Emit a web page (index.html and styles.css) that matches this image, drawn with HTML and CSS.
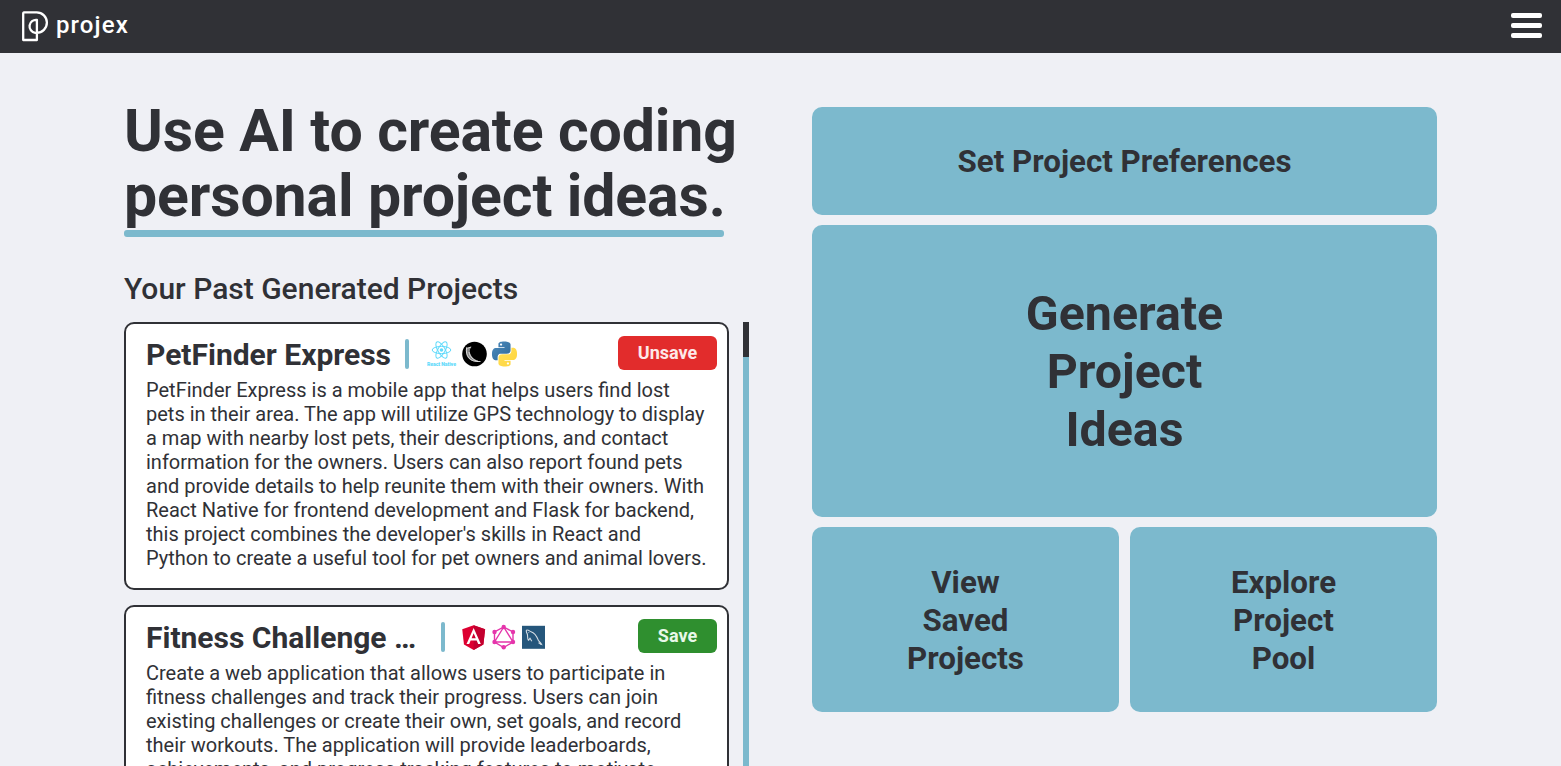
FILE: index.html
```html
<!DOCTYPE html>
<html lang="en">
<head>
<meta charset="utf-8">
<title>projex</title>
<link rel="stylesheet" href="styles.css">
</head>
<body>
<header class="navbar">
  <a class="brand">
    <svg class="brand-mark" viewBox="0 0 28 32" fill="none" stroke="#fff" stroke-width="2.3">
      <path d="M3 2.4H15.7A10.2 10.2 0 0 1 15.7 22.8H14.2A6.5 6.5 0 1 1 15.9 9.9V30H2.2V3.4Q2.2 2.4 3 2.4Z" stroke-linejoin="round"/>
    </svg>
    <span class="brand-name">projex</span>
  </a>
  <button class="menu" aria-label="Menu"><span></span><span></span><span></span></button>
</header>
<main class="page">
  <section class="left">
    <h1 class="title">Use AI to create coding<br><span class="underlined">personal project ideas.</span></h1>
    <div class="title-rule"></div>
    <h2 class="subtitle">Your Past Generated Projects</h2>
    <div class="history">
      <div class="cards">
        <article class="card">
          <div class="card-head">
            <h3 class="card-title">PetFinder Express</h3>
            <span class="divider"></span>
            <div class="tech">
              <svg viewBox="0 0 30 26">
                <g fill="none" stroke="#61dafb" stroke-width="1">
                  <ellipse cx="14.5" cy="9" rx="9.3" ry="3.6"/>
                  <ellipse cx="14.5" cy="9" rx="9.3" ry="3.6" transform="rotate(60 14.5 9)"/>
                  <ellipse cx="14.5" cy="9" rx="9.3" ry="3.6" transform="rotate(120 14.5 9)"/>
                </g>
                <circle cx="14.5" cy="9" r="1.8" fill="#61dafb"/>
                <text class="native" x="14.5" y="25.3" text-anchor="middle" textLength="29">React Native</text>
              </svg>
              <svg viewBox="0 0 30 26">
                <circle cx="17.5" cy="13" r="12.3" fill="#000"/>
                <path d="M9.3 6.2C7.5 14.5 12 22.5 24 20.6C17.8 19.8 14.4 16 13 12C12.4 9.6 13 7.4 14.8 5.6C12.3 6.6 11 6.8 9.3 6.2Z" fill="#8a8a8a"/>
                <path d="M9.6 6.5C8.2 14.5 12.5 21.5 23.5 20.5M10.5 7.2L14 6M12 11C13 16 16 19 21 20.2" fill="none" stroke="#eee" stroke-width=".8"/>
              </svg>
              <svg viewBox="-4.8 -.5 28.8 25">
                <defs>
                  <linearGradient id="blue" x2="1" y2="1"><stop stop-color="#4b8bbe"/><stop offset="1" stop-color="#306998"/></linearGradient>
                  <linearGradient id="yellow" x1="1" y1="1" x2="0" y2="0"><stop stop-color="#ffe05a"/><stop offset="1" stop-color="#ffd43b"/></linearGradient>
                  <path id="snake" d="M14.25.18l.9.2.73.26.59.3.45.32.34.34.25.34.16.33.1.3.04.26.02.2-.01.13V8.5l-.05.63-.13.55-.21.46-.26.38-.3.31-.33.25-.35.19-.35.14-.33.1-.3.07-.26.04-.21.02H8.77l-.69.05-.59.14-.5.22-.41.27-.33.32-.27.35-.2.36-.15.37-.1.35-.07.32-.04.27-.02.21v3.06H3.17l-.21-.03-.28-.07-.32-.12-.35-.18-.36-.26-.36-.36-.35-.46-.32-.59-.28-.73-.21-.88-.14-1.05-.05-1.23.06-1.22.16-1.04.24-.87.32-.71.36-.57.4-.44.42-.33.42-.24.4-.16.36-.1.32-.05.24-.01h.16l.06.01h8.16v-.83H6.18l-.01-2.75-.02-.37.05-.34.11-.31.17-.28.25-.26.31-.23.38-.2.44-.18.51-.15.58-.12.64-.1.71-.06.77-.04.84-.02 1.27.05zm-6.3 1.98l-.23.33-.08.41.08.41.23.34.33.22.41.09.41-.09.33-.22.23-.34.08-.41-.08-.41-.23-.33-.33-.22-.41-.09-.41.09z"/>
                </defs>
                <use href="#snake" fill="url(#blue)"/>
                <use href="#snake" fill="url(#yellow)" transform="rotate(180 12 12)"/>
              </svg>
            </div>
            <button class="save unsave">Unsave</button>
          </div>
          <p class="card-text">PetFinder Express is a mobile app that helps users find lost<br>pets in their area. The app will utilize GPS technology to display<br>a map with nearby lost pets, their descriptions, and contact<br>information for the owners. Users can also report found pets<br>and provide details to help reunite them with their owners. With<br>React Native for frontend development and Flask for backend,<br>this project combines the developer's skills in React and<br>Python to create a useful tool for pet owners and animal lovers.</p>
        </article>
        <article class="card">
          <div class="card-head">
            <h3 class="card-title clipped">Fitness Challenge …</h3>
            <span class="divider"></span>
            <div class="tech">
              <svg viewBox="0 0 30 26">
                <g transform="translate(1.3 -2.4) scale(.123)">
                  <path fill="#dd0031" d="M125 30 31.9 63.2 46.1 186.3 125 230 203.9 186.3 218.1 63.2Z"/>
                  <path fill="#c3002f" d="M125 30V230L203.9 186.3 218.1 63.2Z"/>
                  <path fill="#fff" d="M125 52.1 66.8 182.6h21.7l11.7-29.2h49.4l11.7 29.2H183L125 52.1zm17 83.3h-34l17-40.9 17 40.9z"/>
                </g>
              </svg>
              <svg viewBox="0 0 30 26">
                <g fill="none" stroke="#e535ab" stroke-width="1.4"><path d="M16.7 3 26 8V18L16.7 23.5 7.5 18V8ZM16.7 3 26 18H7.5Z"/></g>
                <g fill="#e535ab"><circle cx="16.7" cy="3" r="2.2"/><circle cx="26" cy="8" r="2.2"/><circle cx="26" cy="18" r="2.2"/><circle cx="16.7" cy="23.2" r="2.2"/><circle cx="7.5" cy="18" r="2.2"/><circle cx="7.5" cy="8" r="2.2"/></g>
              </svg>
              <svg viewBox="0 0 30 26">
                <rect x="5" y="1.8" width="23" height="23" fill="#25567b"/>
                <path d="M11.5 16.5C10 14 11 12 10.3 10C9 7.5 8.8 5.6 10.5 6C12 6.1 12.5 7.3 14 7.7C18.5 9 20 13 21.3 16.2C22 17.5 23.5 18 24.5 20.3L21.5 18.8M24.3 20L22.8 20.3M11.5 16.5L13 14.2L14.8 17.2M11.6 8.3L12 8.8" fill="none" stroke="#d5dee5" stroke-width="1.1"/>
              </svg>
            </div>
            <button class="save">Save</button>
          </div>
          <p class="card-text">Create a web application that allows users to participate in<br>fitness challenges and track their progress. Users can join<br>existing challenges or create their own, set goals, and record<br>their workouts. The application will provide leaderboards,<br>achievements, and progress tracking features to motivate</p>
        </article>
      </div>
      <div class="scrollbar"><div class="thumb"></div></div>
    </div>
  </section>
  <section class="actions">
    <a class="tile">Set Project Preferences</a>
    <a class="tile main">Generate<br>Project<br>Ideas</a>
    <a class="tile half">View<br>Saved<br>Projects</a>
    <a class="tile half">Explore<br>Project<br>Pool</a>
  </section>
</main>
</body>
</html>
```
FILE: styles.css
```css
* { box-sizing: border-box; margin: 0; padding: 0; }
body {
  height: 766px;
  overflow: hidden;
  display: flex;
  flex-direction: column;
  background: #eff0f5;
  color: #303136;
  font-family: Roboto, sans-serif;
}
button { border: 0; font-family: inherit; }
.navbar {
  flex: none;
  height: 53px;
  padding: 0 19px 0 21px;
  display: flex;
  justify-content: space-between;
  background: #303136;
}
.brand { display: flex; gap: 7px; padding-top: 10px; color: #fff; }
.brand-mark { width: 28px; height: 32px; }
.brand-name { padding-top: 1px; font-size: 24px; line-height: 28px; font-weight: 500; letter-spacing: 1.1px; }
.menu { width: 31px; padding-top: 13px; display: flex; flex-direction: column; gap: 5px; background: none; }
.menu span { height: 5px; border-radius: 2px; background: #fff; }
.page { flex: 1; min-height: 0; padding: 0 124px; display: flex; justify-content: space-between; }
.left { width: 625px; padding-top: 45px; display: flex; flex-direction: column; }
.title { flex: none; height: 132px; font-size: 59px; line-height: 65px; font-weight: 700; letter-spacing: -.13px; white-space: nowrap; }
.title-rule { flex: none; width: 600px; height: 7px; border-radius: 3px; background: #7cb9cd; }
.subtitle { flex: none; margin-top: 34px; font-size: 30px; line-height: 36px; font-weight: 500; }
.history { flex: 1; min-height: 0; margin-top: 15px; display: flex; justify-content: space-between; }
.cards { width: 605px; display: flex; flex-direction: column; gap: 15px; overflow: hidden; }
.card { flex: none; height: 268px; padding: 12px 10px 0 20px; background: #fff; border: 2px solid #303136; border-radius: 10px; }
.card-head { display: flex; align-items: center; height: 36px; }
.card-title { padding-top: 1px; font-size: 30px; line-height: 36px; font-weight: 700; white-space: nowrap; width: 245px; }
.card-title.clipped { width: 281px; }
.divider { width: 4px; height: 30px; margin-left: 14px; border-radius: 2px; background: #7cb9cd; }
.tech { display: flex; margin-left: 18px; }
.tech svg { width: 30px; height: 26px; }
.native { font: 900 5.2px Roboto, sans-serif; fill: #61dafb; }
.clipped ~ .tech { margin-left: 12px; }
.save { width: 79px; height: 34px; padding-bottom: 1px; margin: 0 0 2px auto; border-radius: 6px; background: #2f8f2f; color: #e8f8e8; font-size: 18px; font-weight: 700; }
.unsave { width: 99px; background: #e22c2c; color: #fde8e8; }
.card-text { margin-top: 6px; font-size: 20px; line-height: 24px; white-space: nowrap; }
.scrollbar { width: 6px; background: #7cb9cd; }
.thumb { height: 35px; background: #303136; }
.actions {
  width: 625px;
  margin-top: 54px;
  display: grid;
  grid-template-columns: 307px 307px;
  grid-template-rows: 108px 292px 185px;
  gap: 10px 11px;
}
.tile {
  grid-column: span 2;
  display: flex;
  align-items: center;
  justify-content: center;
  padding-top: 2px;
  text-align: center;
  border-radius: 10px;
  background: #7cb9cd;
  font-size: 31.3px;
  line-height: 38px;
  font-weight: 700;
}
.tile.main { font-size: 48.3px; line-height: 58px; }
.tile.half { grid-column: span 1; }
```
